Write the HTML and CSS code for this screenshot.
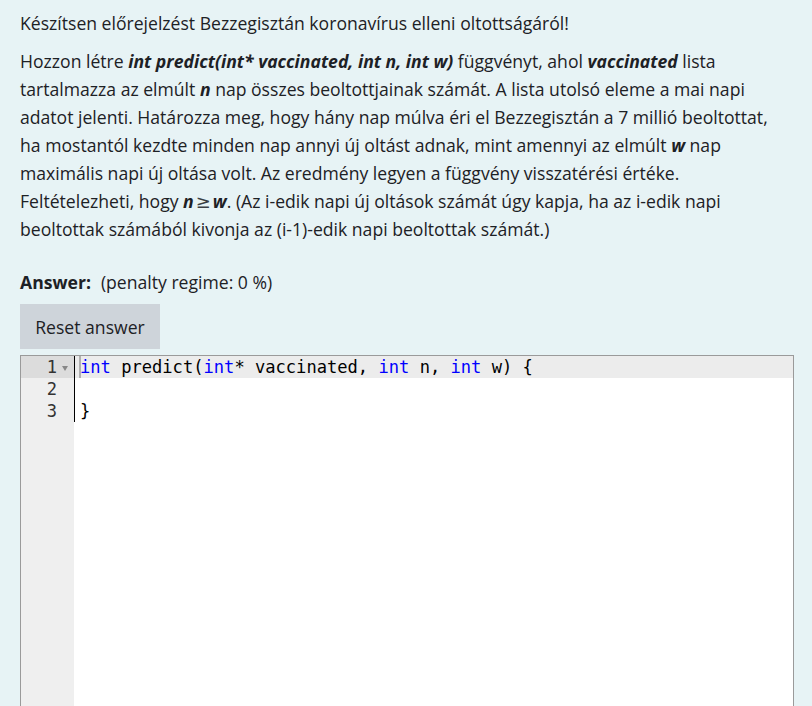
FILE: index.html
```html
<!DOCTYPE html>
<html lang="hu">
<head>
<meta charset="utf-8">
<link rel="stylesheet" href="styles.css">
</head>
<body>
<div class="question">
  <div class="qtext">
    <p class="intro">Készítsen előrejelzést Bezzegisztán koronavírus elleni oltottságáról!</p>
    <p class="desc">Hozzon létre <b><i>int predict(int* vaccinated, int n, int w)</i></b> függvényt, ahol <b><i>vaccinated</i></b> lista<br>tartalmazza az elmúlt <b><i>n</i></b> nap összes beoltottjainak számát. A lista utolsó eleme a mai napi<br>adatot jelenti. Határozza meg, hogy hány nap múlva éri el Bezzegisztán a 7 millió beoltottat,<br>ha mostantól kezdte minden nap annyi új oltást adnak, mint amennyi az elmúlt <b><i>w</i></b> nap<br>maximális napi új oltása volt. Az eredmény legyen a függvény visszatérési értéke.<br>Feltételezheti, hogy <b><i>n</i></b><span class="ge">≥</span><b><i>w</i></b>. (Az i-edik napi új oltások számát úgy kapja, ha az i-edik napi<br>beoltottak számából kivonja az (i-1)-edik napi beoltottak számát.)</p>
  </div>
  <div class="answer-head"><b>Answer:</b><span class="penalty">(penalty regime: 0 %)</span></div>
  <button class="reset">Reset answer</button>
  <div class="editor">
    <div class="gutter">
      <div class="gl active">1<span class="fold"></span></div>
      <div class="gl">2</div>
      <div class="gl">3</div>
    </div>
    <div class="content">
      <div class="lines">
        <div class="cl active"><span class="cursor"></span><span class="kw">int</span> predict(<span class="kw">int</span>* vaccinated, <span class="kw">int</span> n, <span class="kw">int</span> w) {</div>
        <div class="cl">&nbsp;</div>
        <div class="cl">}</div>
      </div>
    </div>
  </div>
</div>
</body>
</html>
```

FILE: styles.css
```css
html, body {
  margin: 0;
  padding: 0;
  height: 100%;
  background: #e7f3f5;
}
body {
  font-family: "Open Sans", sans-serif;
  font-size: 17.6px;
  line-height: 28px;
  color: #1d2125;
  overflow: hidden;
}
.question {
  padding: 9px 0 0 20px;
  display: flex;
  flex-direction: column;
  align-items: flex-start;
}
.qtext {
  white-space: nowrap;
}
.qtext p {
  margin: 0;
}
.intro {
  margin-bottom: 10px !important;
}
.ge {
  font-family: "DejaVu Sans", sans-serif;
  font-size: 18px;
  line-height: 1;
  padding: 0 2px;
  color: #3a3f44;
}
.answer-head {
  margin-top: 25px;
}
.penalty {
  margin-left: 10px;
}
.reset {
  margin-top: 8px;
  width: 140px;
  height: 45px;
  border: 0;
  background: #ced4da;
  color: #1d2125;
  font-family: inherit;
  font-size: 17.6px;
  padding: 0;
  border-radius: 0;
}
.editor {
  margin-top: 6px;
  width: 772px;
  height: 360px;
  border: 1px solid #9a9a9a;
  border-bottom: 0;
  background: #fff;
  display: flex;
  font-family: "DejaVu Sans Mono", monospace;
  font-size: 17.1px;
  line-height: 22px;
}
.gutter {
  width: 53px;
  background: #efefef;
  color: #333;
  flex: none;
}
.gl {
  height: 22px;
  padding-right: 17px;
  text-align: right;
  position: relative;
}
.gl.active {
  background: #dcdcdc;
}
.fold {
  position: absolute;
  right: 6px;
  top: 10px;
  width: 0;
  height: 0;
  border-left: 3px solid transparent;
  border-right: 3px solid transparent;
  border-top: 5px solid #888;
}
.content {
  flex: 1;
}
.lines {
  border-left: 1px solid #000;
}
.cl {
  height: 22px;
  padding-left: 5px;
  white-space: pre;
  color: #000;
  position: relative;
}
.cl.active {
  background: #ececec;
}
.cursor {
  position: absolute;
  left: 4px;
  top: 0;
  width: 2px;
  height: 22px;
  background: #b0b0b0;
}
.kw {
  color: #0000ff;
}
```
